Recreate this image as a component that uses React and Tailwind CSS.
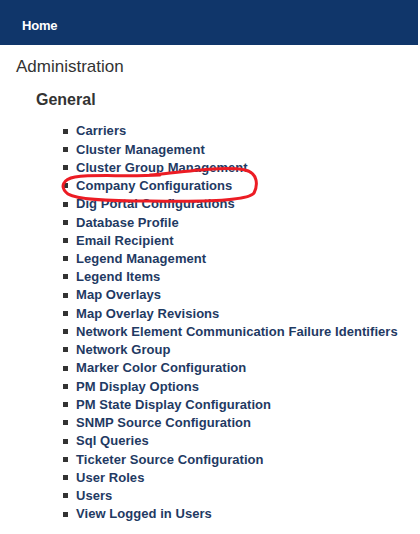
const items = [
  'Carriers',
  'Cluster Management',
  'Cluster Group Management',
  'Company Configurations',
  'Dig Portal Configurations',
  'Database Profile',
  'Email Recipient',
  'Legend Management',
  'Legend Items',
  'Map Overlays',
  'Map Overlay Revisions',
  'Network Element Communication Failure Identifiers',
  'Network Group',
  'Marker Color Configuration',
  'PM Display Options',
  'PM State Display Configuration',
  'SNMP Source Configuration',
  'Sql Queries',
  'Ticketer Source Configuration',
  'User Roles',
  'Users',
  'View Logged in Users',
]

export default function App() {
  return (
    <div className="relative w-[420px] h-[534px] bg-white overflow-hidden font-['Liberation_Sans',Arial,sans-serif] text-[#333]">
      <nav className="h-[45px] bg-[#10366a] flex items-center px-[22px] pt-[6px] mr-[2px]">
        <span className="text-white text-[13px] font-bold tracking-[-0.2px]">Home</span>
      </nav>

      <div className="px-4 pt-[12px]">
        <h1 className="text-[17px] leading-5 text-[#333]">Administration</h1>
        <h2 className="ml-5 mt-[13px] text-[16px] leading-5 font-bold text-[#333]">General</h2>
        <ul className="mt-[12px] ml-[47px] list-none">
          {items.map((item) => (
            <li key={item} className="flex items-center h-[18.24px] text-[13px] font-bold text-[#1f3a63]">
              <span className="w-[5px] h-[5px] bg-[#333] mr-[8px] shrink-0" />
              <a href="#" className="whitespace-nowrap tracking-[0.05px]">{item}</a>
            </li>
          ))}
        </ul>
      </div>

      {/* red hand-drawn circle around Company Configurations */}
      <svg className="absolute left-0 top-0 pointer-events-none" width="420" height="534">
        <path
          d="M150 175 C190 171 225 166 245 170 C258 173 258 185 254 193 C248 201 200 202 150 201 C110 201 78 200 68 194 C59 187 63 179 75 177 C95 174 125 177 160 175"
          fill="none"
          stroke="#ec1c24"
          strokeWidth="3"
          strokeLinecap="round"
        />
      </svg>
    </div>
  )
}
